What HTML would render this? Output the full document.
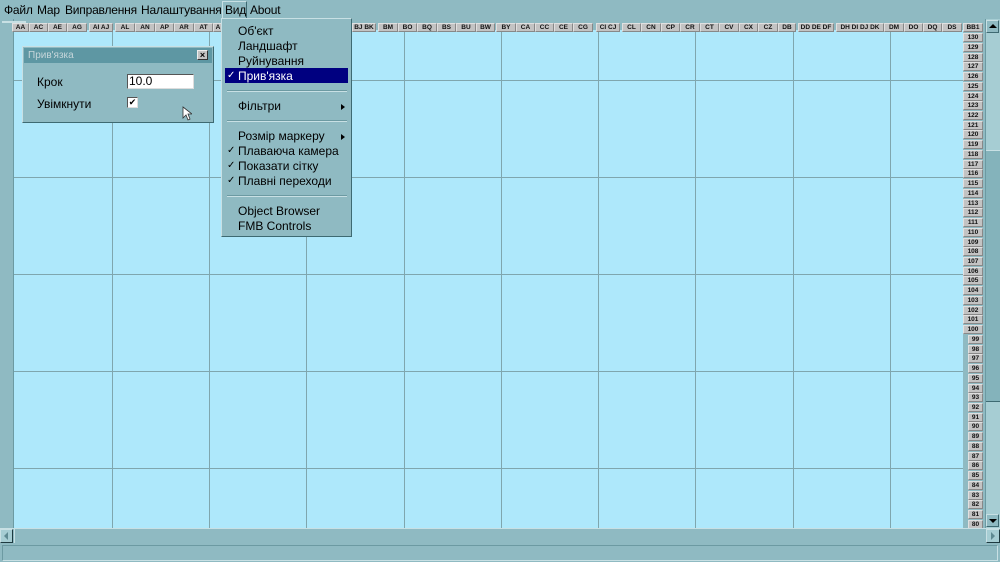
<!DOCTYPE html>
<html><head><meta charset="utf-8"><style>
*{margin:0;padding:0;box-sizing:border-box}
body{width:1000px;height:562px;overflow:hidden;background:#8fbac2;font-family:"Liberation Sans","DejaVu Sans",sans-serif;position:relative}
.abs{position:absolute}
#menubar{left:0;top:0;width:1000px;height:18px;font-size:12px;color:#000;letter-spacing:-0.2px}
#menubar span{position:absolute;top:3px}
#blue{left:14px;top:30px;width:949px;height:498px;background:#aee8fb}
.vl{position:absolute;top:30px;width:1px;height:498px;background:#7fa6ae}
.hl{position:absolute;left:14px;width:949px;height:1px;background:#7fa6ae}
.c{position:absolute;top:23px;height:9px;background:#c3c3c3;border:1px solid #e0e0e0;border-right-color:#888;border-bottom-color:#888;font-size:6.5px;font-weight:bold;line-height:7px;text-align:center;color:#111;white-space:nowrap;overflow:hidden}
.r{position:absolute;height:9px;background:#c3c3c3;border:1px solid #e0e0e0;border-right-color:#888;border-bottom-color:#888;font-size:6.5px;font-weight:bold;line-height:7px;text-align:center;color:#111}
#menu{left:221px;top:18px;width:131px;height:219px;background:#8fbac2;border:1px solid #c8e0e4;border-right-color:#3e6a72;border-bottom-color:#3e6a72;font-size:12px}
#menu div.it{position:absolute;left:16px}
.sep{position:absolute;left:5px;width:120px;height:2px;border-top:1px solid #6c9aa2;border-bottom:1px solid #c8e0e4}
.ck{position:absolute;left:5px;font-size:10px}
.arr{position:absolute;left:119px;width:0;height:0;border-left:4px solid #000;border-top:3px solid transparent;border-bottom:3px solid transparent}
#dlg{left:22px;top:46px;width:192px;height:77px;background:#8fbac2;border:1px solid #c8e0e4;border-right-color:#3e6a72;border-bottom-color:#3e6a72}
</style></head><body>
<div id="menubar" class="abs">
<span style="left:4px">Файл</span><span style="left:37px">Мар</span><span style="left:65px">Виправлення</span><span style="left:141px">Налаштування</span>
<div class="abs" style="left:222px;top:1px;width:25px;height:17px;border:1px solid #c8e0e4;border-right-color:#3e6a72;border-bottom:none"></div>
<span style="left:225px">Вид</span><span style="left:250px">About</span>
</div>
<div class="abs" style="left:0;top:19px;width:14px;height:509px;border-right:1px solid #6c9aa2"></div>
<div class="abs" style="left:2px;top:21px;width:24px;height:2px;background:#c8e0e4"></div>
<div id="blue" class="abs"></div>
<div class="vl" style="left:112px"></div><div class="vl" style="left:209px"></div><div class="vl" style="left:306px"></div><div class="vl" style="left:404px"></div><div class="vl" style="left:501px"></div><div class="vl" style="left:598px"></div><div class="vl" style="left:695px"></div><div class="vl" style="left:793px"></div><div class="vl" style="left:890px"></div>
<div class="hl" style="top:80px"></div><div class="hl" style="top:177px"></div><div class="hl" style="top:274px"></div><div class="hl" style="top:371px"></div><div class="hl" style="top:468px"></div>
<div class="c" style="left:12px;width:17px">AA</div><div class="c" style="left:29px;width:19px">AC</div><div class="c" style="left:48px;width:19px">AE</div><div class="c" style="left:67px;width:20px">AG</div><div class="c" style="left:89px;width:24px">AI AJ</div><div class="c" style="left:115px;width:20px">AL</div><div class="c" style="left:135px;width:20px">AN</div><div class="c" style="left:155px;width:19px">AP</div><div class="c" style="left:174px;width:20px">AR</div><div class="c" style="left:194px;width:19px">AT</div><div class="c" style="left:213px;width:10px">A</div>
<div class="c" style="left:352px;width:24px">BJ BK</div><div class="c" style="left:378px;width:20px">BM</div><div class="c" style="left:398px;width:19px">BO</div><div class="c" style="left:417px;width:20px">BQ</div><div class="c" style="left:437px;width:19px">BS</div><div class="c" style="left:456px;width:20px">BU</div><div class="c" style="left:476px;width:19px">BW</div><div class="c" style="left:496px;width:20px">BY</div><div class="c" style="left:516px;width:19px">CA</div><div class="c" style="left:535px;width:19px">CC</div><div class="c" style="left:554px;width:19px">CE</div><div class="c" style="left:573px;width:20px">CG</div><div class="c" style="left:596px;width:24px">CI CJ</div><div class="c" style="left:622px;width:19px">CL</div><div class="c" style="left:641px;width:20px">CN</div><div class="c" style="left:661px;width:19px">CP</div><div class="c" style="left:680px;width:20px">CR</div><div class="c" style="left:700px;width:19px">CT</div><div class="c" style="left:719px;width:20px">CV</div><div class="c" style="left:739px;width:19px">CX</div><div class="c" style="left:758px;width:20px">CZ</div><div class="c" style="left:778px;width:18px">DB</div><div class="c" style="left:798px;width:36px">DD DE DF</div><div class="c" style="left:836px;width:48px">DH DI DJ DK</div><div class="c" style="left:884px;width:20px">DM</div><div class="c" style="left:904px;width:19px">DO</div><div class="c" style="left:923px;width:19px">DQ</div><div class="c" style="left:942px;width:20px">DS</div>
<div class="r" style="left:963px;top:23px;width:20px">BB1</div>
<div class="r" style="left:963px;top:33px;width:20px">130</div><div class="r" style="left:963px;top:43px;width:20px">129</div><div class="r" style="left:963px;top:53px;width:20px">128</div><div class="r" style="left:963px;top:62px;width:20px">127</div><div class="r" style="left:963px;top:72px;width:20px">126</div><div class="r" style="left:963px;top:82px;width:20px">125</div><div class="r" style="left:963px;top:92px;width:20px">124</div><div class="r" style="left:963px;top:101px;width:20px">123</div><div class="r" style="left:963px;top:111px;width:20px">122</div><div class="r" style="left:963px;top:121px;width:20px">121</div><div class="r" style="left:963px;top:130px;width:20px">120</div><div class="r" style="left:963px;top:140px;width:20px">119</div><div class="r" style="left:963px;top:150px;width:20px">118</div><div class="r" style="left:963px;top:160px;width:20px">117</div><div class="r" style="left:963px;top:169px;width:20px">116</div><div class="r" style="left:963px;top:179px;width:20px">115</div><div class="r" style="left:963px;top:189px;width:20px">114</div><div class="r" style="left:963px;top:199px;width:20px">113</div><div class="r" style="left:963px;top:208px;width:20px">112</div><div class="r" style="left:963px;top:218px;width:20px">111</div><div class="r" style="left:963px;top:228px;width:20px">110</div><div class="r" style="left:963px;top:238px;width:20px">109</div><div class="r" style="left:963px;top:247px;width:20px">108</div><div class="r" style="left:963px;top:257px;width:20px">107</div><div class="r" style="left:963px;top:267px;width:20px">106</div><div class="r" style="left:963px;top:276px;width:20px">105</div><div class="r" style="left:963px;top:286px;width:20px">104</div><div class="r" style="left:963px;top:296px;width:20px">103</div><div class="r" style="left:963px;top:306px;width:20px">102</div><div class="r" style="left:963px;top:315px;width:20px">101</div><div class="r" style="left:963px;top:325px;width:20px">100</div>
<div class="r" style="left:968px;top:335px;width:15px">99</div><div class="r" style="left:968px;top:345px;width:15px">98</div><div class="r" style="left:968px;top:354px;width:15px">97</div><div class="r" style="left:968px;top:364px;width:15px">96</div><div class="r" style="left:968px;top:374px;width:15px">95</div><div class="r" style="left:968px;top:384px;width:15px">94</div><div class="r" style="left:968px;top:393px;width:15px">93</div><div class="r" style="left:968px;top:403px;width:15px">92</div><div class="r" style="left:968px;top:413px;width:15px">91</div><div class="r" style="left:968px;top:422px;width:15px">90</div><div class="r" style="left:968px;top:432px;width:15px">89</div><div class="r" style="left:968px;top:442px;width:15px">88</div><div class="r" style="left:968px;top:452px;width:15px">87</div><div class="r" style="left:968px;top:461px;width:15px">86</div><div class="r" style="left:968px;top:471px;width:15px">85</div><div class="r" style="left:968px;top:481px;width:15px">84</div><div class="r" style="left:968px;top:491px;width:15px">83</div><div class="r" style="left:968px;top:500px;width:15px">82</div><div class="r" style="left:968px;top:510px;width:15px">81</div><div class="r" style="left:968px;top:520px;width:15px">80</div>
<div class="abs" style="left:985px;top:19px;width:15px;height:509px;background:#a6cdd3;border-left:1px solid #6c9aa2"></div>
<div class="abs" style="left:986px;top:150px;width:14px;height:252px;background:#84b3bb;border-top:1px solid #c8e0e4;border-bottom:1px solid #3e6a72"></div>
<div class="abs" style="left:986px;top:20px;width:13px;height:13px;background:#8fbac2;border:1px solid #c8e0e4;border-right-color:#3e6a72;border-bottom-color:#3e6a72"></div>
<div class="abs" style="left:989px;top:24px;border-bottom:4px solid #000;border-left:4px solid transparent;border-right:4px solid transparent"></div>
<div class="abs" style="left:986px;top:514px;width:13px;height:13px;background:#8fbac2;border:1px solid #c8e0e4;border-right-color:#3e6a72;border-bottom-color:#3e6a72"></div>
<div class="abs" style="left:989px;top:519px;border-top:4px solid #000;border-left:4px solid transparent;border-right:4px solid transparent"></div>
<div class="abs" style="left:0;top:528px;width:1000px;height:16px;background:#8fbac2;border-top:1px solid #c8e0e4"></div>
<div class="abs" style="left:0;top:529px;width:13px;height:14px;background:#a6cdd3;border:1px solid #c8e0e4;border-right-color:#1e3a40;border-bottom-color:#1e3a40"></div>
<div class="abs" style="left:4px;top:532px;border-right:4px solid #5e8a92;border-top:4px solid transparent;border-bottom:4px solid transparent"></div>
<div class="abs" style="left:986px;top:529px;width:14px;height:14px;background:#a6cdd3;border:1px solid #c8e0e4;border-right-color:#1e3a40;border-bottom-color:#1e3a40"></div>
<div class="abs" style="left:991px;top:532px;border-left:4px solid #5e8a92;border-top:4px solid transparent;border-bottom:4px solid transparent"></div>
<div class="abs" style="left:14px;top:529px;width:972px;height:14px;border-left:1px solid #c8e0e4"></div>
<div class="abs" style="left:2px;top:545px;width:996px;height:16px;border:1px solid #c8e0e4;border-top-color:#6c9aa2;border-left-color:#6c9aa2"></div>
<div id="dlg" class="abs">
<div class="abs" style="left:1px;top:1px;width:188px;height:15px;background:#5e97a3"></div>
<div class="abs" style="left:5px;top:3px;font-size:10px;color:#c6d6da">Прив'язка</div>
<div class="abs" style="left:174px;top:3px;width:11px;height:10px;background:#c3c3c3;border:1px solid #eee;border-right-color:#333;border-bottom-color:#333;font-size:9px;line-height:8px;text-align:center;font-weight:bold">×</div>
<div class="abs" style="left:14px;top:28px;font-size:12px">Крок</div>
<div class="abs" style="left:104px;top:27px;width:67px;height:15px;background:#fff;border:1px solid #555;border-right-color:#ddd;border-bottom-color:#ddd;font-size:12px;line-height:13px;padding-left:1px">10.0</div>
<div class="abs" style="left:14px;top:50px;font-size:12px">Увімкнути</div>
<div class="abs" style="left:104px;top:50px;width:11px;height:11px;background:#fff;border:1px solid #555;border-right-color:#ddd;border-bottom-color:#ddd;font-size:9px;line-height:9px;text-align:center">✔</div>
</div>
<svg class="abs" style="left:182px;top:106px" width="10" height="16"><path d="M1 1 L1 12 L4 9 L6 14 L8 13 L6 8 L10 8 Z" fill="#fff" stroke="#333" stroke-width="0.8"/></svg>
<div id="menu" class="abs">
<div class="it" style="top:5px">Об'єкт</div>
<div class="it" style="top:20px">Ландшафт</div>
<div class="it" style="top:35px">Руйнування</div>
<div class="abs" style="left:3px;top:49px;width:123px;height:15px;background:#000080"></div>
<div class="ck" style="top:51px;color:#fff">✓</div>
<div class="it" style="top:50px;color:#fff">Прив'язка</div>
<div class="sep" style="top:71px"></div>
<div class="it" style="top:80px">Фільтри</div><div class="arr" style="top:85px"></div>
<div class="sep" style="top:101px"></div>
<div class="it" style="top:110px">Розмір маркеру</div><div class="arr" style="top:115px"></div>
<div class="ck" style="top:126px">✓</div><div class="it" style="top:125px">Плаваюча камера</div>
<div class="ck" style="top:141px">✓</div><div class="it" style="top:140px">Показати сітку</div>
<div class="ck" style="top:156px">✓</div><div class="it" style="top:155px">Плавні переходи</div>
<div class="sep" style="top:176px"></div>
<div class="it" style="top:185px">Object Browser</div>
<div class="it" style="top:200px">FMB Controls</div>
</div>
</body></html>
